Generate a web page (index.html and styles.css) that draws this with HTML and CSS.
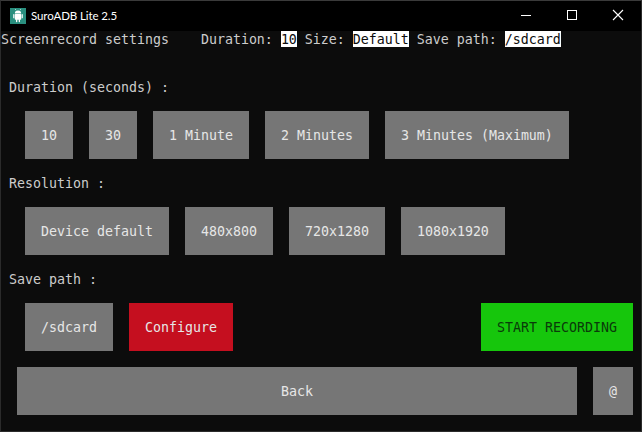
FILE: index.html
```html
<!DOCTYPE html>
<html lang="en">
<head>
    <meta charset="UTF-8">
    <title>SuroADB Lite 2.5</title>
    <link rel="stylesheet" href="styles.css">
</head>
<body>
<div class="window">
    <div class="titlebar">
        <div class="app-icon">
            <svg width="16" height="16" viewBox="0 0 16 16">
                <rect width="16" height="16" fill="#2a8f7f"/>
                <path d="M4.8 5.6a3.2 3 0 0 1 6.4 0z" fill="#fff"/>
                <path d="M6 2.2 5.2 1M10 2.2l.8-1.2" stroke="#fff" stroke-width=".6"/>
                <rect x="4.8" y="6.1" width="6.4" height="5.6" rx=".6" fill="#fff"/>
                <rect x="3.2" y="6.1" width="1.2" height="4.2" rx=".6" fill="#fff"/>
                <rect x="11.6" y="6.1" width="1.2" height="4.2" rx=".6" fill="#fff"/>
                <rect x="6" y="11" width="1.3" height="3.2" rx=".6" fill="#fff"/>
                <rect x="8.7" y="11" width="1.3" height="3.2" rx=".6" fill="#fff"/>
            </svg>
        </div>
        <span class="app-title">SuroADB Lite 2.5</span>
        <div class="controls">
            <svg class="ctl" width="46" height="30" viewBox="0 0 46 30"><path d="M18 14.5h10" stroke="#fff"/></svg>
            <svg class="ctl" width="46" height="30" viewBox="0 0 46 30"><rect x="18.5" y="9.5" width="9" height="9" fill="none" stroke="#fff"/></svg>
            <svg class="ctl" width="46" height="30" viewBox="0 0 46 30"><path d="M18 9l10 10M28 9 18 19" stroke="#fff" stroke-width="1.1"/></svg>
        </div>
    </div>

    <div class="content">
        <div class="status">Screenrecord settings    Duration: <span class="val">10</span> Size: <span class="val">Default</span> Save path: <span class="val">/sdcard</span></div>

        <div class="label first">Duration (seconds) :</div>
        <div class="row">
            <button>10</button>
            <button>30</button>
            <button>1 Minute</button>
            <button>2 Minutes</button>
            <button>3 Minutes (Maximum)</button>
        </div>

        <div class="label">Resolution :</div>
        <div class="row">
            <button>Device default</button>
            <button>480x800</button>
            <button>720x1280</button>
            <button>1080x1920</button>
        </div>

        <div class="label">Save path :</div>
        <div class="row">
            <button>/sdcard</button>
            <button class="red">Configure</button>
            <button class="green">START RECORDING</button>
        </div>

        <div class="bottom">
            <button class="back">Back</button>
            <button>@</button>
        </div>
    </div>
</div>
</body>
</html>
```

FILE: styles.css
```css
html, body {
    margin: 0;
    padding: 0;
    background: #0c0c0c;
}

.window {
    width: 642px;
    height: 432px;
    box-sizing: border-box;
    border: 1px solid #2b2b2b;
    border-top-color: #3a3a3a;
    display: flex;
    flex-direction: column;
    overflow: hidden;
}

.titlebar {
    height: 30px;
    flex: none;
    background: #000;
    display: flex;
    align-items: center;
    padding-left: 9px;
    color: #fff;
}

.app-icon {
    width: 16px;
    height: 16px;
    margin-right: 5px;
}

.app-icon svg {
    display: block;
}

.app-title {
    font-family: "Lato", "Liberation Sans", sans-serif;
    font-size: 11.5px;
    letter-spacing: -0.1px;
    line-height: 14px;
    margin-top: -1px;
}

.controls {
    margin-left: auto;
    display: flex;
}

.ctl {
    display: block;
}

.content {
    flex: 1;
    font-family: "DejaVu Sans Mono", "Liberation Mono", monospace;
    font-size: 13.29px;
    color: #ccc;
}

.status {
    height: 16px;
    line-height: 18px;
    white-space: pre;
}

.val {
    background: #fff;
    color: #0c0c0c;
    display: inline-block;
    height: 16px;
    vertical-align: top;
}

.label {
    height: 16px;
    line-height: 18px;
    margin: 16px 0 16px 8px;
}

.label.first {
    margin-top: 32px;
}

.row {
    display: flex;
    gap: 16px;
    padding-left: 24px;
    padding-right: 8px;
}

button {
    height: 48px;
    padding: 0 16px;
    border: 0;
    background: #767676;
    color: #e6e6e6;
    font: inherit;
}

.red {
    background: #c50f1f;
}

.green {
    background: #16c60c;
    color: #0a3a0a;
    margin-left: auto;
}

.bottom {
    display: flex;
    gap: 16px;
    margin-top: 16px;
    padding: 0 8px 0 16px;
}

.back {
    flex: 1;
}
```
